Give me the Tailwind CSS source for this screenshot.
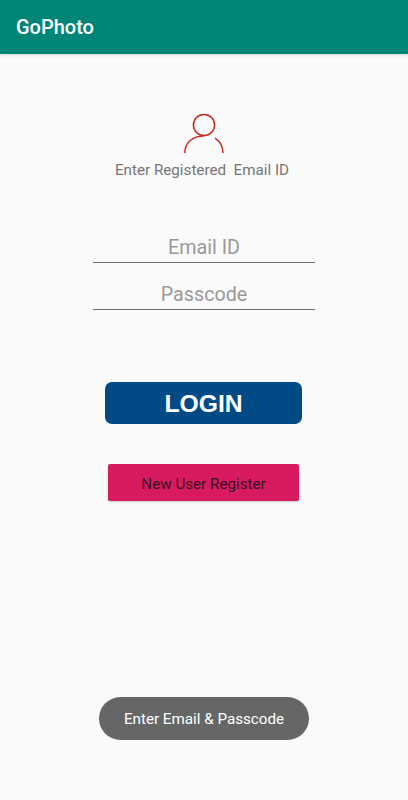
<!DOCTYPE html>
<html lang="en">
<head>
    <meta charset="UTF-8">
    <meta name="viewport" content="width=device-width, initial-scale=1.0">
    <title>GoPhoto</title>
    <script src="https://cdn.jsdelivr.net/npm/@tailwindcss/browser@4"></script>
</head>
<body class="bg-[#fafafa] font-[Roboto,sans-serif] h-screen overflow-hidden flex flex-col">
    <!-- app bar -->
    <header class="h-[54px] shrink-0 bg-[#008577] px-4 flex items-center shadow-[0_1px_3px_rgba(0,0,0,0.15)]">
        <h1 class="text-white text-[20px] font-medium">GoPhoto</h1>
    </header>

    <main class="flex-1 flex flex-col items-center">
        <!-- user icon -->
        <svg class="mt-[58px] w-10 h-[42px]" viewBox="0 0 40 42" fill="none" stroke="#c9281e" stroke-width="1.5">
            <circle cx="20" cy="13" r="10.6"/>
            <path d="M0.8 41C0.8 31 8 24 20.5 23.7"/>
            <path d="M31 26.2C36 29.5 39 34.5 39 41"/>
        </svg>
        <p class="mt-1.5 mr-1 text-[15.2px] leading-5 text-[#757575] whitespace-pre">Enter Registered  Email ID</p>

        <form class="flex flex-col items-center">
            <input type="text" placeholder="Email ID" class="mt-[52px] h-[31px] w-[222px] text-center text-[19.7px] border-b border-[#6b6b6b] placeholder:text-[#999999] outline-none">
            <input type="password" placeholder="Passcode" class="mt-4 h-[31px] w-[222px] text-center text-[19.7px] border-b border-[#6b6b6b] placeholder:text-[#999999] outline-none">
            <button type="button" class="mt-[72px] mr-px h-[42px] w-[197px] pt-0.5 rounded-[7px] bg-[#004b85] text-white text-[24.7px] font-bold font-[Liberation_Sans,sans-serif]">LOGIN</button>
            <button type="button" class="mt-10 mr-px h-[37px] w-[191px] pt-[3px] rounded-xs bg-[#d81b60] text-[#3a0a1c] text-[15.2px] shadow-[0_1px_2px_rgba(0,0,0,0.2)]">New User Register</button>
        </form>

        <!-- toast -->
        <div class="mt-auto mb-[60px] h-[43px] w-[210px] pt-0.5 rounded-full bg-[#666666] text-white text-[15.2px] flex items-center justify-center">Enter Email &amp; Passcode</div>
    </main>
</body>
</html>
